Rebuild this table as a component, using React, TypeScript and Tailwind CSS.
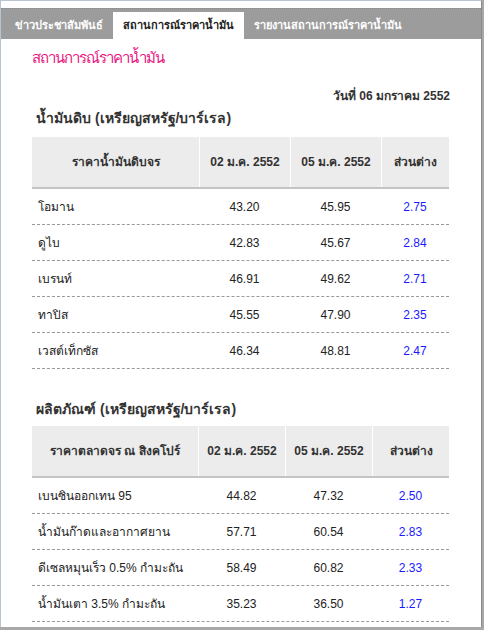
import React from 'react'

interface Row { name: string; a: string; b: string; diff: string }

const crude: Row[] = [
  { name: 'โอมาน', a: '43.20', b: '45.95', diff: '2.75' },
  { name: 'ดูไบ', a: '42.83', b: '45.67', diff: '2.84' },
  { name: 'เบรนท์', a: '46.91', b: '49.62', diff: '2.71' },
  { name: 'ทาปิส', a: '45.55', b: '47.90', diff: '2.35' },
  { name: 'เวสต์เท็กซัส', a: '46.34', b: '48.81', diff: '2.47' },
]

const products: Row[] = [
  { name: 'เบนซินออกเทน 95', a: '44.82', b: '47.32', diff: '2.50' },
  { name: 'น้ำมันก๊าดและอากาศยาน', a: '57.71', b: '60.54', diff: '2.83' },
  { name: 'ดีเซลหมุนเร็ว 0.5% กำมะถัน', a: '58.49', b: '60.82', diff: '2.33' },
  { name: 'น้ำมันเตา 3.5% กำมะถัน', a: '35.23', b: '36.50', diff: '1.27' },
]

const tabs = ['ข่าวประชาสัมพันธ์', 'สถานการณ์ราคาน้ำมัน', 'รายงานสถานการณ์ราคาน้ำมัน']

function PriceTable({ label, rows, cols }: { label: string; rows: Row[]; cols: string }) {
  return (
    <div className="ml-[31px] w-[417px] text-[12px]">
      <div className={`grid ${cols} h-[52px] border-b-2 border-[#c4c4c4]`}>
        {[label, '02 ม.ค. 2552', '05 ม.ค. 2552', 'ส่วนต่าง'].map((h, i) => (
          <div key={h} className={`bg-[#ececec] flex items-center justify-center font-bold text-[#333] ${i > 0 ? 'border-l border-white' : ''}`}>
            {h}
          </div>
        ))}
      </div>
      {rows.map(r => (
        <div key={r.name} className={`grid ${cols} h-[36px] items-center border-b border-dashed border-[#9a9a9a] text-[#222]`}>
          <div className="pl-[6px]">{r.name}</div>
          <div className="text-center">{r.a}</div>
          <div className="text-center">{r.b}</div>
          <div className="text-center text-[#1a1aff]">{r.diff}</div>
        </div>
      ))}
    </div>
  )
}

export default function App() {
  return (
    <div className="w-[484px] h-[630px] bg-[#a8a8a8] overflow-hidden" style={{ fontFamily: '"Liberation Sans", "Noto Sans", sans-serif' }}>
      <div className="w-[482px] h-[627px] border-t border-l border-[#b9c4d2] border-r border-r-[#8a8a8a] bg-white flex flex-col">
        <div className="h-[7px] bg-white" />
        {/* tab strip */}
        <div className="h-[31px] bg-[#9c9c9c] flex items-end pl-[4px] border-t border-dotted border-[#888]">
          {tabs.map((t, i) => (
            <div key={t} className={`h-[27px] flex items-center px-[10px] text-[11px] font-bold ${i === 1 ? 'bg-white text-[#222]' : 'text-white'}`}>
              {t}
            </div>
          ))}
        </div>
        <div className="pl-[31px] pt-[9px] text-[15px] tracking-[-1px] text-[#e8177f] leading-[20px]">สถานการณ์ราคาน้ำมัน</div>
        <div className="mt-[21px] pr-[31px] text-right text-[12px] font-bold text-[#333] leading-[14px]">วันที่ 06 มกราคม 2552</div>
        <div className="pl-[35px] mt-[6px] text-[14px] font-bold text-[#333] leading-[18px]">น้ำมันดิบ (เหรียญสหรัฐ/บาร์เรล)</div>
        <div className="mt-[10px]">
          <PriceTable label="ราคาน้ำมันดิบจร" rows={crude} cols="grid-cols-[167px_91px_91px_68px]" />
        </div>
        <div className="pl-[35px] mt-[31px] text-[14px] font-bold text-[#333] leading-[18px]">ผลิตภัณฑ์ (เหรียญสหรัฐ/บาร์เรล)</div>
        <div className="mt-[8px]">
          <PriceTable label="ราคาตลาดจร ณ สิงคโปร์" rows={products} cols="grid-cols-[166px_87px_87px_77px]" />
        </div>
      </div>
    </div>
  )
}
